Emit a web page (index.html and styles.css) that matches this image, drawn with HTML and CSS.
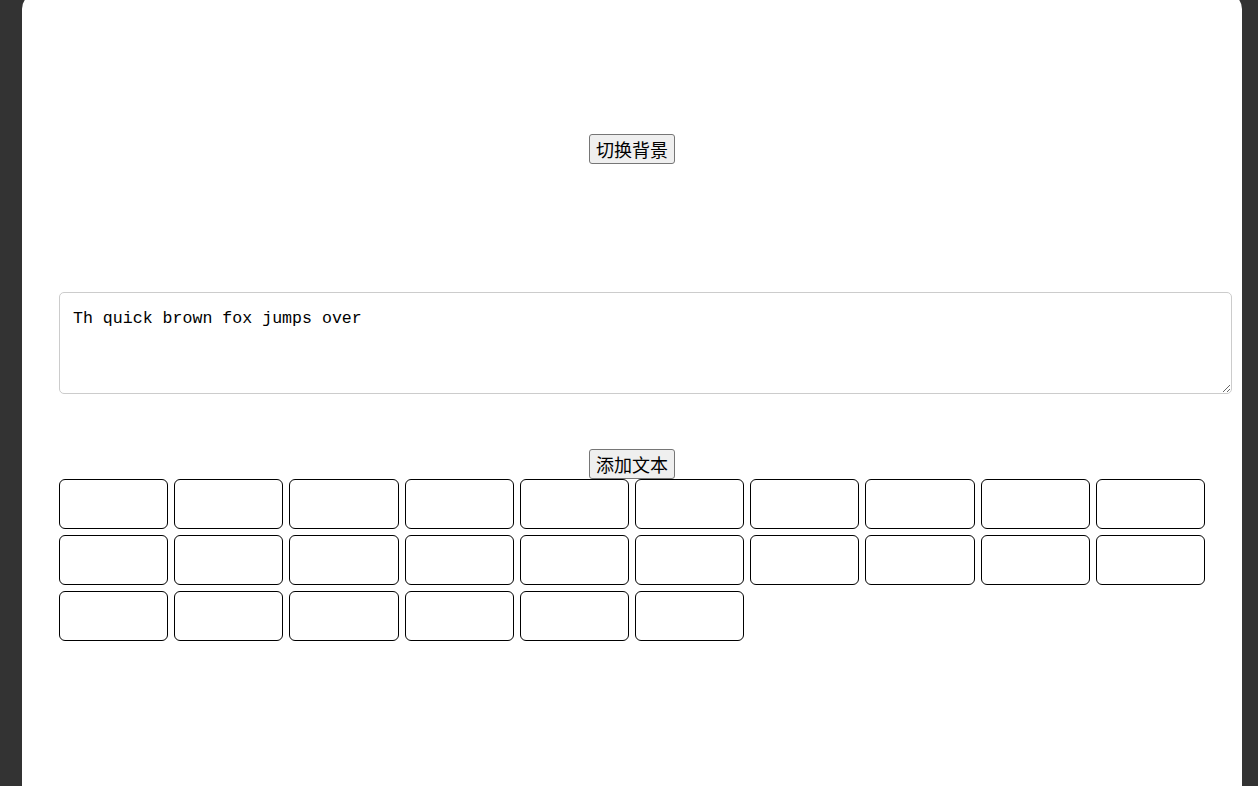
FILE: index.html
```html
<!DOCTYPE html>
<html lang="zh">
<head>
<meta charset="utf-8">
<title>切换背景</title>
<link rel="stylesheet" href="styles.css">
</head>
<body>
<div class="page">
  <div class="top">
    <button class="btn" type="button">切换背景</button>
  </div>
  <textarea class="editor">Th quick brown fox jumps over</textarea>
  <div class="add-row">
    <button class="btn" type="button">添加文本</button>
  </div>
  <div class="grid">
    <div class="cell"></div><div class="cell"></div><div class="cell"></div><div class="cell"></div><div class="cell"></div>
    <div class="cell"></div><div class="cell"></div><div class="cell"></div><div class="cell"></div><div class="cell"></div>
    <div class="cell"></div><div class="cell"></div><div class="cell"></div><div class="cell"></div><div class="cell"></div>
    <div class="cell"></div><div class="cell"></div><div class="cell"></div><div class="cell"></div><div class="cell"></div>
    <div class="cell"></div><div class="cell"></div><div class="cell"></div><div class="cell"></div><div class="cell"></div>
    <div class="cell"></div>
  </div>
</div>
</body>
</html>
```
FILE: styles.css
```css
html, body {
  margin: 0;
  padding: 0;
  height: 100%;
  overflow: hidden;
}
body {
  background: #333333;
  font-family: "Noto Sans CJK SC", "Noto Sans", sans-serif;
}
.page {
  box-sizing: border-box;
  width: 1220px;
  margin: -7px 0 0 22px;
  padding: 141px 37px 0 37px;
  min-height: 820px;
  background: #ffffff;
  border-radius: 16px;
}
.top {
  display: flex;
  justify-content: center;
}
.btn {
  font-family: "Noto Sans CJK SC", "Microsoft YaHei", sans-serif;
  font-size: 18px;
  line-height: 25px;
  height: 30px;
  padding: 0 6px;
  border: 1px solid #767676;
  border-radius: 3px;
  background: #efefef;
  color: #000000;
  width: 86px;
  display: flex;
  align-items: center;
  justify-content: center;
  white-space: nowrap;
}
.editor {
  display: block;
  box-sizing: content-box;
  width: 100%;
  height: 74px;
  margin: 128px 0 0 0;
  padding: 13px 12px 13px 13px;
  border: 1px solid #cccccc;
  border-radius: 5px;
  font-family: "Liberation Mono", "DejaVu Sans Mono", monospace;
  font-size: 16.6px;
  line-height: 26px;
  color: #000000;
  background: #ffffff;
  resize: vertical;
}
.add-row {
  display: flex;
  justify-content: center;
  margin-top: 55px;
}
.grid {
  display: grid;
  grid-template-columns: repeat(10, 1fr);
  gap: 6px;
}
.cell {
  box-sizing: border-box;
  height: 50px;
  border: 1px solid #000000;
  border-radius: 6px;
}
```
